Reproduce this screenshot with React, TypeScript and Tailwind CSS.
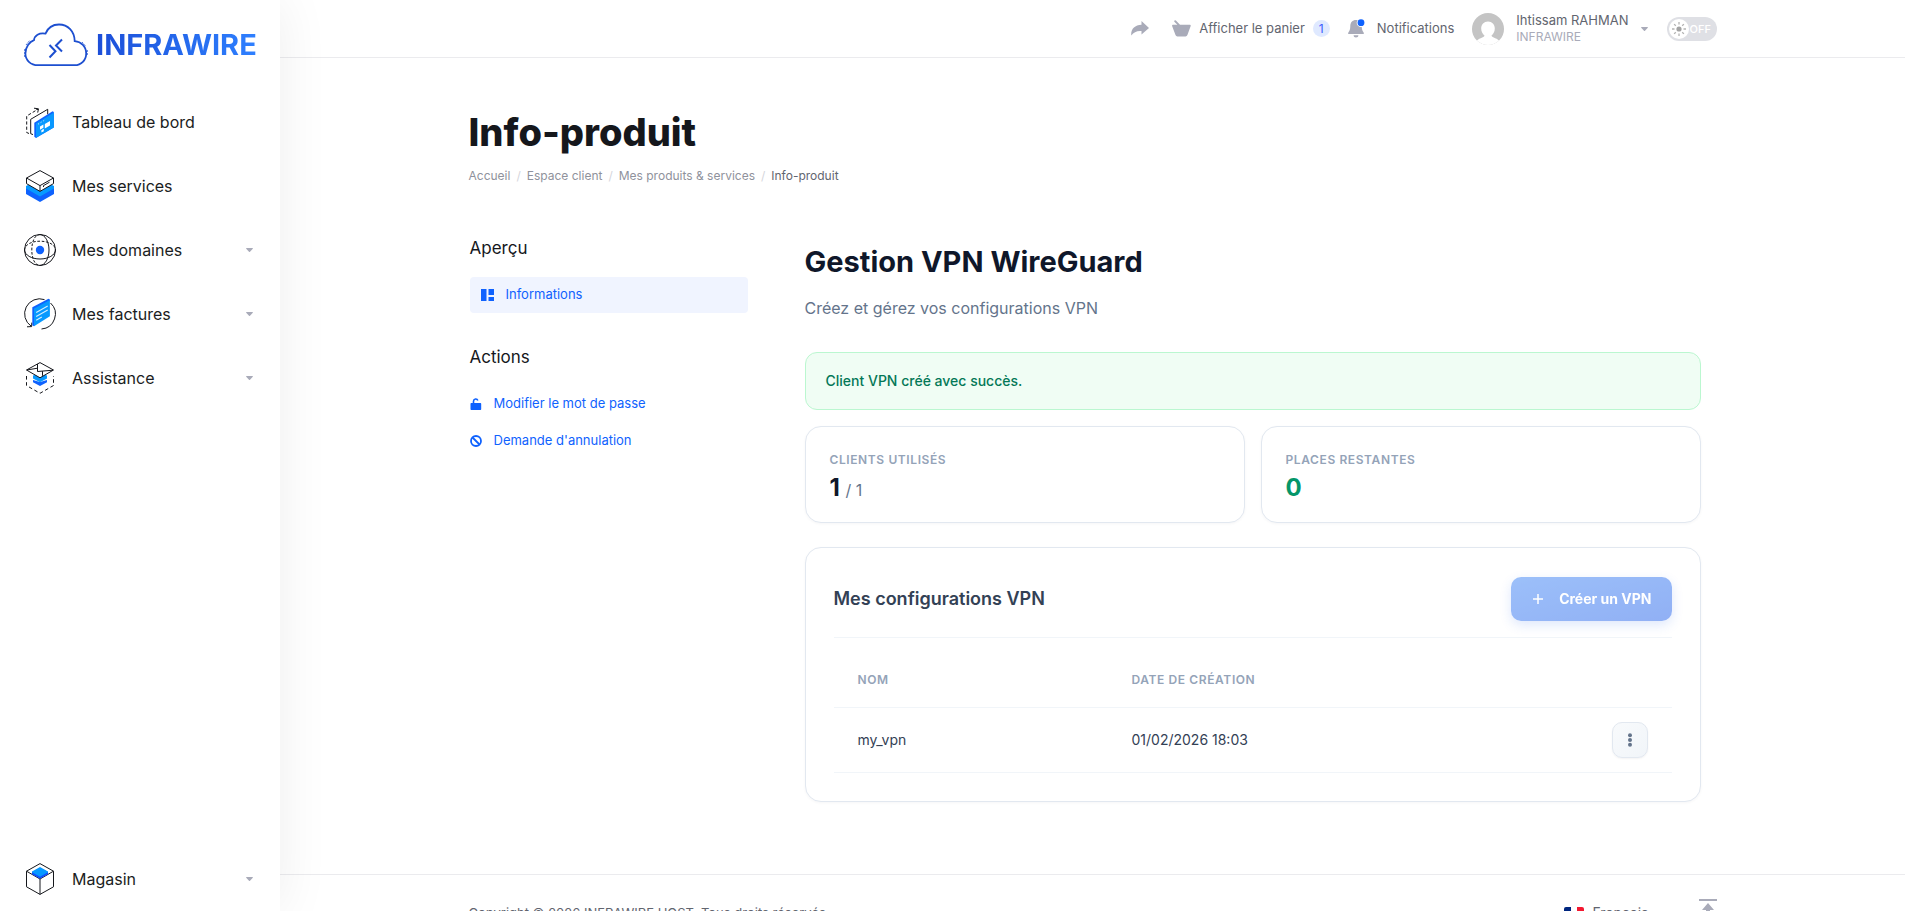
import { useState } from "react";
import type { ReactNode } from "react";

type NavItem = {
  label: string;
  icon: ReactNode;
  expandable?: boolean;
};

function Caret(props: { className?: string }) {
  return (
    <svg viewBox="0 0 7 4" className={`h-1 w-[7px] shrink-0 fill-[#a9abb9] ${props.className ?? ""}`}>
      <path d="M0.6 0h5.8c.5 0 .7.5.4.8L4 3.7a.7.7 0 0 1-1 0L.2.8C-.1.5.1 0 .6 0Z" />
    </svg>
  );
}

function DashboardIcon() {
  return (
    <svg viewBox="0 0 32 32" className="size-8 shrink-0" fill="none" stroke="#15171c">
      <path d="M5 27.5l-2.3-1V10L12 4.4" strokeDasharray="3.2 2" />
      <path d="M10 2.2l4.5.6-.8 3.8M12 3l2 .6" />
      <path d="M9 28.6l-2.3-.9V13.3l17-10v5" />
      <path d="M10.3 16.7L28.6 5.2l1.2.8v15.5L12 32l-1.7-1.2Z" fill="#0f62fe" stroke="none" />
      <path d="M12 17.5L29.8 6.6v14.9L12 31.8Z" fill="#0799ff" stroke="none" />
      <path d="M14 18.2l1-.6M16.6 16.6l1-.6M19.2 15l1-.6" stroke="#bfe4ff" />
      <path d="M16 20.6l3.4-2v3.2l-3.4 2ZM20.8 18l5.2-3v4.6l-5.2 3ZM17.4 24.2l2.4-1.4v2.4l-2.4 1.4Z" fill="#fff" stroke="none" />
    </svg>
  );
}

function ServicesIcon() {
  return (
    <svg viewBox="0 0 32 32" className="size-8 shrink-0" fill="none" stroke="#15171c">
      <path d="M2 17l14 8 14-8v7l-14 8-14-8Z" fill="#0f62fe" stroke="none" />
      <path d="M2 16l14-7 14 7v2.500l-14 8-14-8Z" fill="#0799ff" stroke="none" />
      <path d="M2.500 8L16 .6 29.500 8v5.600L16 21.400 2.500 13.600Z" fill="#fff" />
      <path d="M2.500 8L16 15.600 29.500 8M16 15.600v5.800M19.500 17v-1.400l6-3.400" />
    </svg>
  );
}

function DomainsIcon() {
  return (
    <svg viewBox="0 0 32 32" className="size-8 shrink-0" fill="none" stroke="#15171c">
      <circle cx="16" cy="16" r="15.500" />
      <path d="M.6 16c0 5 7 9 15.400 9s15.400-4 15.400-9" />
      <path d="M.6 16C.6 11 7 7.200 16 7.200S31.400 11 31.400 16" strokeDasharray="2.600 1.600" />
      <path d="M16 .6c5 0 9 7 9 15.400s-4 15.400-9 15.400" />
      <path d="M16 .6C11 .6 7.800 7 7.800 16s3.200 15.400 8.200 15.400" strokeDasharray="2.600 1.600" />
      <circle cx="16" cy="16" r="4.200" fill="#0f62fe" stroke="none" />
    </svg>
  );
}

function InvoicesIcon() {
  return (
    <svg viewBox="0 0 32 32" className="size-8 shrink-0" fill="none" stroke="#15171c">
      <path d="M17.500 31a15 15 0 0 0 9-26M20.500 1.600A15 15 0 0 0 7.200 28.200" />
      <path d="M3 28.800l4.600-.2.200-4" />
      <path d="M8.300 9.300L24.500 .8l1.400.6v1.200L10 28.300l-1.700-1Z" fill="#0f62fe" stroke="none" />
      <path d="M10 10.600L25.900 2v16.200L10 28.300Z" fill="#0799ff" stroke="none" />
      <path d="M12.200 14.600l11.500-6.500M12.200 18.400l11.500-6.500M12.200 22.200l5.600-3.200" stroke="#d5edff" strokeWidth="1.100" />
    </svg>
  );
}

function SupportIcon() {
  return (
    <svg viewBox="0 0 32 32" className="size-8 shrink-0" fill="none" stroke="#15171c">
      <path d="M2.500 14v9.500L16 31.300l13.500-7.800V14" strokeDasharray="3.600 2.600" />
      <path d="M9 18l7 2 7-2v2.200l-7 3.800-7-3.800Z" fill="#0f62fe" stroke="none" />
      <path d="M9 13.500l7-2 7 2v3l-7 3.800-7-3.800Z" fill="#0799ff" stroke="none" />
      <path d="M2.500 8L16 .6 29.500 8 16 15.800Z" fill="#fff" />
      <path d="M13.500 2v7.500L29 8.200M2.800 8l10.700-1.800M18.500 9.200v4.600" />
    </svg>
  );
}

function StoreIcon() {
  return (
    <svg viewBox="0 0 32 32" className="size-8 shrink-0" fill="none" stroke="#15171c">
      <path d="M2.500 8.200L16 .6l13.500 7.600v15.600L16 31.400 2.500 23.800Z" />
      <path d="M2.500 8.200L16 16l13.500-7.800M16 16v15.400" />
      <path d="M8 9l8-4 8 4v2.200l-8 4.600-8-4.600Z" fill="#0f4ffe" stroke="none" />
      <path d="M8 8.400L16 4l8 4.400v.9l-8 4.500-8-4.500Z" fill="#0799ff" stroke="none" />
    </svg>
  );
}

const mainNav: NavItem[] = [
  { label: "Tableau de bord", icon: <DashboardIcon /> },
  { label: "Mes services", icon: <ServicesIcon /> },
  { label: "Mes domaines", icon: <DomainsIcon />, expandable: true },
  { label: "Mes factures", icon: <InvoicesIcon />, expandable: true },
  { label: "Assistance", icon: <SupportIcon />, expandable: true },
];

function NavLink(props: { item: NavItem }) {
  return (
    <a href="#" className="flex h-16 items-center gap-4 px-6 text-base text-[#1b1d22]">
      {props.item.icon}
      <span className="flex-1">{props.item.label}</span>
      {props.item.expandable ? <Caret className="mr-[3px]" /> : null}
    </a>
  );
}

function Logo() {
  return (
    <a href="#" className="flex h-[90px] items-center gap-2 px-6">
      <svg viewBox="0 0 64 44" className="h-11 w-16 shrink-0" fill="none" stroke="#1d4fd0">
        <path
          d="M14 42.200C6.500 42.200 1.400 37 1.400 30.500 1.400 24 5.500 18.800 10 17.200 10.500 12.500 15 9.500 21.500 10.600 24 4.500 29 1.500 35 1.500c9 0 15.500 7 15.700 16.600 6.500.6 11.500 5.400 11.500 12.400 0 6.700-5 11.700-11.500 11.700Z"
          strokeWidth="1.800"
        />
        <path d="M.7 34V26M2 22l4-5M58 19l4 4.500M63.300 27v5" strokeWidth=".8" strokeDasharray="2 1" />
        <path d="M25.500 22l6 6.200-6 6.300M38 16.500l-6 6 6 6" strokeWidth="2" />
      </svg>
      <span className="bg-gradient-to-r from-[#1d4ed8] to-[#2f80ff] bg-clip-text text-[29px] leading-9 font-bold text-transparent">
        INFRAWIRE
      </span>
    </a>
  );
}

function Sidebar() {
  return (
    <aside className="sticky top-0 z-10 flex h-screen w-[280px] shrink-0 flex-col bg-white shadow-[0_0_50px_rgba(0,0,0,0.07)]">
      <Logo />
      <nav className="flex flex-1 flex-col">
        {mainNav.map((item) => (
          <NavLink key={item.label} item={item} />
        ))}
        <div className="mt-auto">
          <NavLink item={{ label: "Magasin", icon: <StoreIcon />, expandable: true }} />
        </div>
      </nav>
    </aside>
  );
}

function ThemeToggle() {
  const [dark, setDark] = useState(false);
  return (
    <label className="ml-[19px] flex h-6 w-[50px] cursor-pointer items-center gap-px rounded-full bg-[#dfe0e5] px-0.5">
      <input
        type="checkbox"
        className="sr-only"
        aria-label="Mode sombre"
        checked={dark}
        onChange={(e) => setDark(e.target.checked)}
      />
      <span className="flex size-5 items-center justify-center rounded-full bg-white">
        <svg viewBox="0 0 16 16" className="size-4" stroke="#b3b3b3" strokeWidth="1.300">
          <circle cx="8" cy="8" r="2.600" fill="#a3a3a3" stroke="none" />
          <path d="M8 1v2.500M8 12.500V15M1 8h2.500M12.500 8H15M3.100 3.100l1.700 1.700M11.200 11.200l1.700 1.700M3.100 12.900l1.700-1.700M11.200 4.800l1.700-1.700" />
        </svg>
      </span>
      <span className="text-[11px] leading-4 font-medium text-white">{dark ? "ON" : "OFF"}</span>
    </label>
  );
}

function TopBar() {
  return (
    <header className="border-b border-[#ebebee] px-6">
      <div className="mx-auto flex h-[57px] max-w-[1248px] items-center justify-end text-[13px] text-[#62656f]">
        <button type="button" aria-label="Partager" className="mr-[23px]">
          <svg viewBox="0 0 18 15" className="h-[15px] w-[18px] fill-[#a9abb9]">
            <path d="M10.500 0 18 7l-7.500 6.600V10C6 9.600 2.800 11 .3 14.600-.5 8.500 3.500 4.200 10.500 3.800Z" />
          </svg>
        </button>
        <a href="#" className="mr-[17px] flex items-center gap-2">
          <svg viewBox="0 0 19 17" className="h-[17px] w-[19px] fill-[#a9abb9]">
            <path d="M2.600.6a.9.9 0 0 1 1.300 0L8 4.800h9.600c1 0 1.300.7 1 1.500l-3.200 8.800a2 2 0 0 1-1.900 1.300H5.400a2 2 0 0 1-1.900-1.300L.2 6.300c-.3-.8.1-1.500 1-1.500h4.200L2.600 2a.9.9 0 0 1 0-1.400Z" />
          </svg>
          Afficher le panier
          <span className="flex size-[17px] items-center justify-center rounded-full bg-[#dfe9ff] text-xs text-[#3d5cff]">
            1
          </span>
        </a>
        <a href="#" className="mr-[18px] flex items-center gap-3">
          <svg viewBox="0 0 18 19" className="h-[19px] w-[18px] fill-[#a9abb9]">
            <path d="M9 1c3.700 0 5.700 2.600 5.700 6 0 3.400.8 5 1.900 6.400.6.800.3 1.600-.6 1.600H2c-.9 0-1.200-.8-.6-1.600C2.500 12 3.300 10.400 3.300 7c0-3.400 2-6 5.700-6ZM6.600 16.300h4.800c0 1.300-1 2.300-2.400 2.300s-2.400-1-2.400-2.300Z" />
            <circle cx="14" cy="3.700" r="4.300" fill="#fff" />
            <circle cx="14" cy="3.700" r="3.400" fill="#0f62fe" />
          </svg>
          Notifications
        </a>
        <button type="button" className="flex items-center gap-3 text-left">
          <svg viewBox="0 0 32 32" className="size-8">
            <clipPath id="avatar-clip">
              <circle cx="16" cy="16" r="16" />
            </clipPath>
            <g clipPath="url(#avatar-clip)">
              <path d="M0 0h32v32H0Z" fill="#c4c4c4" />
              <path d="M16 8.500c4 0 6.800 3 6.800 7 0 3-1.400 5.600-3.300 7 0 2.400 7 2.500 8.500 6.500v5H4v-5c1.500-4 8.500-4.100 8.500-6.500-1.900-1.400-3.300-4-3.300-7 0-4 2.800-7 6.800-7Z" fill="#fff" />
            </g>
          </svg>
          <span className="flex flex-col leading-[17px]">
            <span>Ihtissam RAHMAN</span>
            <span className="text-xs leading-4 text-[#a9abb9]">INFRAWIRE</span>
          </span>
          <Caret />
        </button>
        <ThemeToggle />
      </div>
    </header>
  );
}

function SideMenu() {
  return (
    <div className="w-[280px] shrink-0 px-px text-[13px] text-[#0f62fe]">
      <h2 className="mb-[17px] text-[17px] leading-6 text-[#15171c]">Aperçu</h2>
      <a href="#" className="flex h-9 items-center gap-3 rounded bg-[#f0f4ff] px-[11px]">
        <svg viewBox="0 0 13 12" className="h-3 w-[13px] fill-[#0f62fe]">
          <path d="M0 0h5.500v12H0ZM7.500 0H13v6H7.500ZM7.500 8H13v4H7.500Z" />
        </svg>
        Informations
      </a>
      <h2 className="mt-8 mb-4 text-[17px] leading-6 text-[#15171c]">Actions</h2>
      <a href="#" className="flex h-[37px] items-center gap-3">
        <svg viewBox="0 0 12 12" className="size-3">
          <path d="M3.500 6V3.200A2.200 2.200 0 0 1 7.800 2.600" fill="none" stroke="#0f62fe" strokeWidth="1.600" />
          <path d="M1.500 5h8.700c.6 0 1 .4 1 1v5c0 .6-.4 1-1 1H1.500c-.6 0-1-.4-1-1V6c0-.6.4-1 1-1Z" fill="#0f62fe" />
        </svg>
        Modifier le mot de passe
      </a>
      <a href="#" className="flex h-[37px] items-center gap-3">
        <svg viewBox="0 0 12 12" className="size-3" fill="none" stroke="#0f62fe" strokeWidth="1.800">
          <circle cx="6" cy="6" r="5" />
          <path d="M2.500 2.500l7 7" />
        </svg>
        Demande d'annulation
      </a>
    </div>
  );
}

function StatCard(props: { label: string; children: ReactNode }) {
  return (
    <div className="flex-1 rounded-2xl border border-[#e2e8f0] bg-white px-6 pt-[23px] pb-4 shadow-[0_1px_3px_rgba(15,23,42,0.04)]">
      <p className="text-xs leading-5 font-semibold tracking-wider text-[#94a3b8]">{props.label}</p>
      <p className="text-2xl leading-9 font-bold text-[#0f172a]">{props.children}</p>
    </div>
  );
}

function VpnTable() {
  return (
    <table className="w-full text-left">
      <thead>
        <tr className="h-[69px] border-b border-[#f1f5f9] text-xs tracking-wider text-[#94a3b8]">
          <th className="w-[274px] px-6 pt-4 font-semibold">NOM</th>
          <th className="px-6 pt-4 font-semibold">DATE DE CRÉATION</th>
          <th className="w-[84px] px-6" aria-label="Options" />
        </tr>
      </thead>
      <tbody>
        <tr className="h-[65px] border-b border-[#f1f5f9] text-sm text-[#334155]">
          <td className="px-6">my_vpn</td>
          <td className="px-6">01/02/2026 18:03</td>
          <td className="px-6">
            <button
              type="button"
              aria-label="Options de my_vpn"
              className="flex size-9 items-center justify-center rounded-[10px] border border-[#e2e8f0] bg-gradient-to-br from-[#f8fafc] to-[#f1f5f9] shadow-[0_1px_2px_rgba(15,23,42,0.05)]"
            >
              <svg viewBox="0 0 4 14" className="h-[14px] w-1 fill-[#64748b]">
                <circle cx="2" cy="2.300" r="2" />
                <circle cx="2" cy="7" r="2" />
                <circle cx="2" cy="11.700" r="2" />
              </svg>
            </button>
          </td>
        </tr>
      </tbody>
    </table>
  );
}

function VpnPanel() {
  return (
    <section className="min-w-0 flex-1 pt-2 pr-4">
      <h2 className="text-[29px] leading-9 font-bold text-[#0f172a]">Gestion VPN WireGuard</h2>
      <p className="mt-4 text-base leading-6 text-[#64748b]">Créez et gérez vos configurations VPN</p>
      <div
        role="status"
        className="mt-8 flex h-[58px] items-center rounded-xl border border-[#bbf7d0] bg-[#f0fdf4] px-5 text-sm font-medium text-[#047857]"
      >
        Client VPN créé avec succès.
      </div>
      <div className="mt-4 flex gap-4">
        <StatCard label="CLIENTS UTILISÉS">
          1 <span className="text-base font-normal text-[#64748b]">/ 1</span>
        </StatCard>
        <StatCard label="PLACES RESTANTES">
          <span className="text-[#059669]">0</span>
        </StatCard>
      </div>
      <div className="mt-6 rounded-2xl border border-[#e2e8f0] bg-white px-7 pt-[29px] pb-7 shadow-[0_1px_3px_rgba(15,23,42,0.04)]">
        <div className="flex items-center justify-between border-b border-[#f1f5f9] pb-4">
          <h3 className="text-lg leading-6 font-semibold text-[#334155]">Mes configurations VPN</h3>
          <button
            type="button"
            disabled
            className="flex h-11 items-center gap-[14px] rounded-[10px] bg-gradient-to-br from-[#3b82f6] to-[#2563eb] px-5 text-sm font-bold text-white opacity-50 shadow-[0_4px_12px_rgba(37,99,235,0.3)]"
          >
            <svg viewBox="0 0 14 14" className="size-[14px]" stroke="#fff" strokeWidth="1.500">
              <path d="M7 2v10M2 7h10" />
            </svg>
            Créer un VPN
          </button>
        </div>
        <VpnTable />
      </div>
    </section>
  );
}

function Footer() {
  return (
    <footer className="border-t border-[#ebebee] px-6">
      <div className="mx-auto flex max-w-[1248px] items-start pt-6 pb-6 text-[13px] text-[#62656f]">
        <p className="flex-1 pt-0.5 leading-6">Copyright © 2026 INFRAWIRE HOST. Tous droits réservés.</p>
        <button type="button" className="mr-[35px] flex items-center gap-2 pt-0.5 text-sm leading-6">
          <svg viewBox="0 0 20 15" className="mt-1 h-[15px] w-5">
            <clipPath id="flag-clip">
              <rect width="20" height="15" rx="2" />
            </clipPath>
            <g clipPath="url(#flag-clip)">
              <path d="M0 0h7v15H0Z" fill="#00267f" />
              <path d="M7 0h6v15H7Z" fill="#fff" />
              <path d="M13 0h7v15h-7Z" fill="#f31830" />
            </g>
          </svg>
          Français
          <Caret />
        </button>
        <button type="button" aria-label="Haut de page">
          <svg viewBox="0 0 18 20" className="h-5 w-[18px] fill-[#a9abb9]">
            <path d="M0 0h18v2H0ZM9 4l6 7h-4v9H7v-9H3Z" />
          </svg>
        </button>
      </div>
    </footer>
  );
}

export default function App() {
  return (
    <div className="flex min-h-screen bg-white font-['Inter','Liberation_Sans',sans-serif]">
      <Sidebar />
      <div className="flex min-w-0 flex-1 flex-col">
        <TopBar />
        <main className="flex-1 px-6 pt-[50px] pb-[72px]">
          <div className="mx-auto max-w-[1248px]">
            <h1 className="text-[38px] leading-12 font-extrabold text-[#15171c]">Info-produit</h1>
            <nav aria-label="Fil d'Ariane" className="mt-[10px] flex gap-1.5 text-xs leading-5 text-[#8f929c]">
              <a href="#">Accueil</a>
              <span className="text-[#d5d6dc]">/</span>
              <a href="#">Espace client</a>
              <span className="text-[#d5d6dc]">/</span>
              <a href="#">Mes produits &amp; services</a>
              <span className="text-[#d5d6dc]">/</span>
              <span className="text-[#62656f]">Info-produit</span>
            </nav>
            <div className="mt-[50px] flex gap-14">
              <SideMenu />
              <VpnPanel />
            </div>
          </div>
        </main>
        <Footer />
      </div>
    </div>
  );
}
